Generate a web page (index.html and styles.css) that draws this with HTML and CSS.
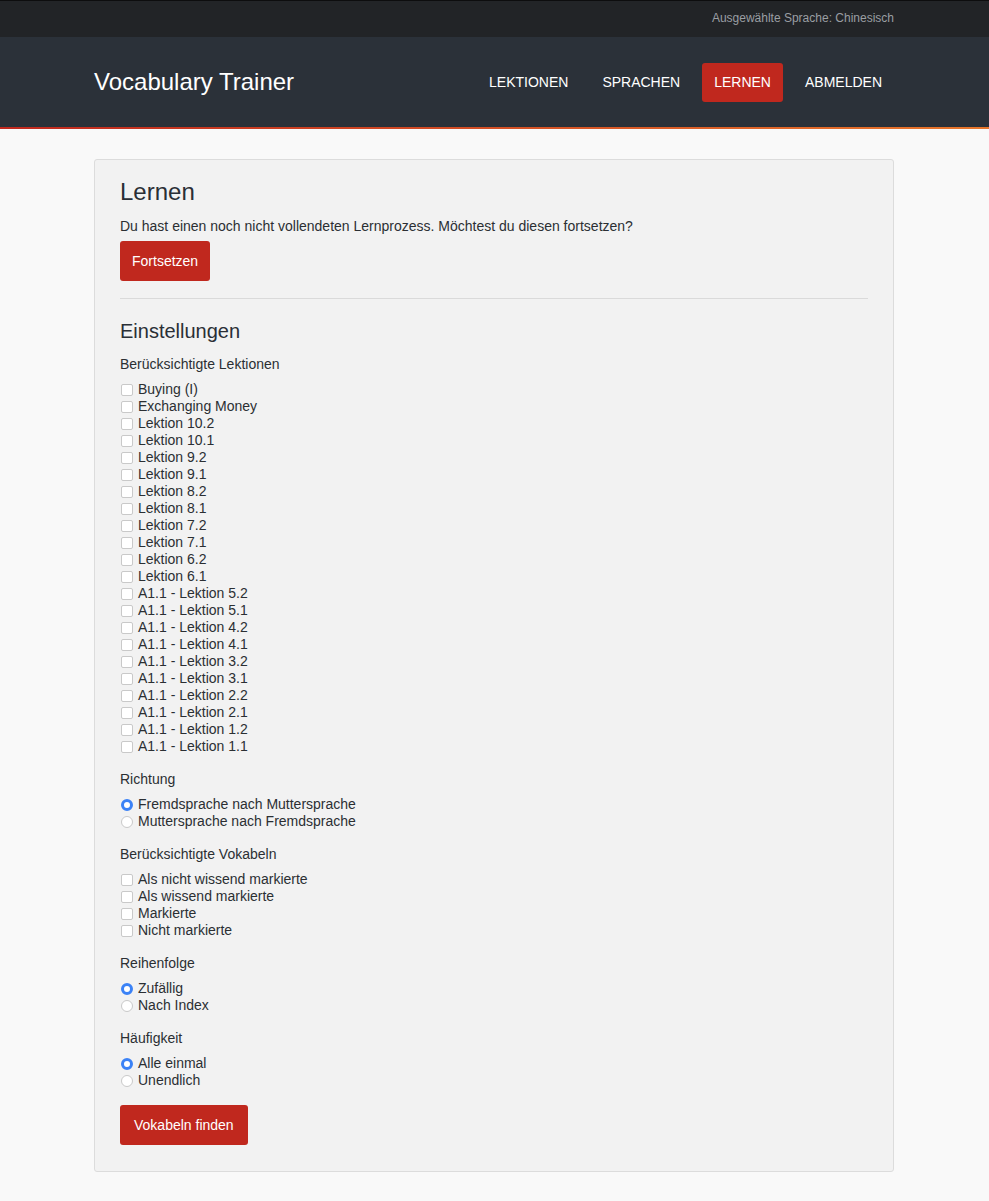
FILE: index.html
```html
<!DOCTYPE html>
<html lang="de">
<head>
<meta charset="utf-8">
<title>Vocabulary Trainer</title>
<link rel="stylesheet" href="styles.css">
</head>
<body>
<div class="topbar">
  <div class="container topbar-inner">Ausgewählte Sprache: Chinesisch</div>
</div>
<header class="header">
  <div class="container header-inner">
    <div class="brand">Vocabulary Trainer</div>
    <nav class="nav">
      <a class="nav-item">LEKTIONEN</a>
      <a class="nav-item">SPRACHEN</a>
      <a class="nav-item active">LERNEN</a>
      <a class="nav-item">ABMELDEN</a>
    </nav>
  </div>
</header>
<main class="container main">
  <section class="card">
    <h1 class="title">Lernen</h1>
    <p class="text">Du hast einen noch nicht vollendeten Lernprozess. Möchtest du diesen fortsetzen?</p>
    <button class="btn">Fortsetzen</button>
    <hr class="divider">
    <h2 class="subtitle">Einstellungen</h2>

    <div class="group">
      <div class="group-label">Berücksichtigte Lektionen</div>
      <label class="opt"><input type="checkbox" class="cb">Buying (I)</label>
      <label class="opt"><input type="checkbox" class="cb">Exchanging Money</label>
      <label class="opt"><input type="checkbox" class="cb">Lektion 10.2</label>
      <label class="opt"><input type="checkbox" class="cb">Lektion 10.1</label>
      <label class="opt"><input type="checkbox" class="cb">Lektion 9.2</label>
      <label class="opt"><input type="checkbox" class="cb">Lektion 9.1</label>
      <label class="opt"><input type="checkbox" class="cb">Lektion 8.2</label>
      <label class="opt"><input type="checkbox" class="cb">Lektion 8.1</label>
      <label class="opt"><input type="checkbox" class="cb">Lektion 7.2</label>
      <label class="opt"><input type="checkbox" class="cb">Lektion 7.1</label>
      <label class="opt"><input type="checkbox" class="cb">Lektion 6.2</label>
      <label class="opt"><input type="checkbox" class="cb">Lektion 6.1</label>
      <label class="opt"><input type="checkbox" class="cb">A1.1 - Lektion 5.2</label>
      <label class="opt"><input type="checkbox" class="cb">A1.1 - Lektion 5.1</label>
      <label class="opt"><input type="checkbox" class="cb">A1.1 - Lektion 4.2</label>
      <label class="opt"><input type="checkbox" class="cb">A1.1 - Lektion 4.1</label>
      <label class="opt"><input type="checkbox" class="cb">A1.1 - Lektion 3.2</label>
      <label class="opt"><input type="checkbox" class="cb">A1.1 - Lektion 3.1</label>
      <label class="opt"><input type="checkbox" class="cb">A1.1 - Lektion 2.2</label>
      <label class="opt"><input type="checkbox" class="cb">A1.1 - Lektion 2.1</label>
      <label class="opt"><input type="checkbox" class="cb">A1.1 - Lektion 1.2</label>
      <label class="opt"><input type="checkbox" class="cb">A1.1 - Lektion 1.1</label>
    </div>

    <div class="group">
      <div class="group-label">Richtung</div>
      <label class="opt"><input type="radio" name="dir" class="rb" checked>Fremdsprache nach Muttersprache</label>
      <label class="opt"><input type="radio" name="dir" class="rb">Muttersprache nach Fremdsprache</label>
    </div>

    <div class="group">
      <div class="group-label">Berücksichtigte Vokabeln</div>
      <label class="opt"><input type="checkbox" class="cb">Als nicht wissend markierte</label>
      <label class="opt"><input type="checkbox" class="cb">Als wissend markierte</label>
      <label class="opt"><input type="checkbox" class="cb">Markierte</label>
      <label class="opt"><input type="checkbox" class="cb">Nicht markierte</label>
    </div>

    <div class="group">
      <div class="group-label">Reihenfolge</div>
      <label class="opt"><input type="radio" name="ord" class="rb" checked>Zufällig</label>
      <label class="opt"><input type="radio" name="ord" class="rb">Nach Index</label>
    </div>

    <div class="group">
      <div class="group-label">Häufigkeit</div>
      <label class="opt"><input type="radio" name="freq" class="rb" checked>Alle einmal</label>
      <label class="opt"><input type="radio" name="freq" class="rb">Unendlich</label>
    </div>

    <button class="btn btn-find">Vokabeln finden</button>
  </section>
</main>
</body>
</html>
```
FILE: styles.css
```css
* { box-sizing: border-box; }
html, body { margin: 0; padding: 0; }
body {
  background: #f9f9f9;
  font-family: "Liberation Sans", Arial, sans-serif;
  font-size: 14px;
  color: #2b2f33;
}
.container {
  width: 801px;
  padding-right: 1px;
  margin: 0 auto;
}
.topbar {
  background: #222427;
  border-top: 1px solid #0d0d0e;
  height: 37px;
}
.topbar-inner {
  display: flex;
  justify-content: flex-end;
  align-items: center;
  height: 34px;
  font-size: 12px;
  color: #9a9ea3;
}
.header {
  background: #2b3139;
  height: 92px;
  border-bottom: 2px solid transparent;
  border-image: linear-gradient(to right, #c0281e, #e8772c) 1;
}
.header-inner {
  display: flex;
  align-items: center;
  justify-content: space-between;
  height: 90px;
}
.brand {
  color: #fff;
  font-size: 24px;
}
.nav {
  display: flex;
  gap: 10px;
}
.nav-item {
  color: #fff;
  font-size: 14px;
  padding: 0 12px;
  height: 39px;
  line-height: 39px;
  border-radius: 3px;
}
.nav-item.active {
  background: #c0281e;
}
.main {
  padding-top: 30px;
  padding-bottom: 30px;
}
.card {
  background: #f2f2f2;
  border: 1px solid #dcdcdc;
  border-radius: 3px;
  padding: 18px 25px 26px;
}
.title {
  margin: 0;
  font-size: 24px;
  font-weight: normal;
  color: #2a2f36;
  line-height: 28px;
}
.text {
  margin: 10px 0 5px;
  line-height: 20px;
}
.btn {
  display: inline-block;
  background: #c0281e;
  color: #fff;
  border: none;
  border-radius: 3px;
  font-family: inherit;
  font-size: 14px;
  height: 40px;
  padding: 0 12px;
}
.divider {
  border: none;
  border-top: 1px solid #dadada;
  margin: 17px 0 20px;
}
.subtitle {
  margin: 0 0 13px;
  font-size: 20px;
  font-weight: normal;
  color: #2a2f36;
  line-height: 24px;
}
.group {
  display: flex;
  flex-direction: column;
  margin-bottom: 16px;
}
.group-label {
  line-height: 17px;
  margin-bottom: 8px;
}
.opt {
  display: flex;
  align-items: center;
  line-height: 17px;
  height: 17px;
}
.cb, .rb {
  appearance: none;
  -webkit-appearance: none;
  margin: 0 5px 0 1px;
  width: 12px;
  height: 12px;
  background: #fff;
  border: 1px solid #c9c9c9;
  flex: none;
}
.cb { border-radius: 2px; }
.rb { border-radius: 50%; }
.rb:checked {
  background: #fff;
  border: 3.5px solid #3b82f6;
}
.btn-find {
  padding: 0 14px;
}
```
